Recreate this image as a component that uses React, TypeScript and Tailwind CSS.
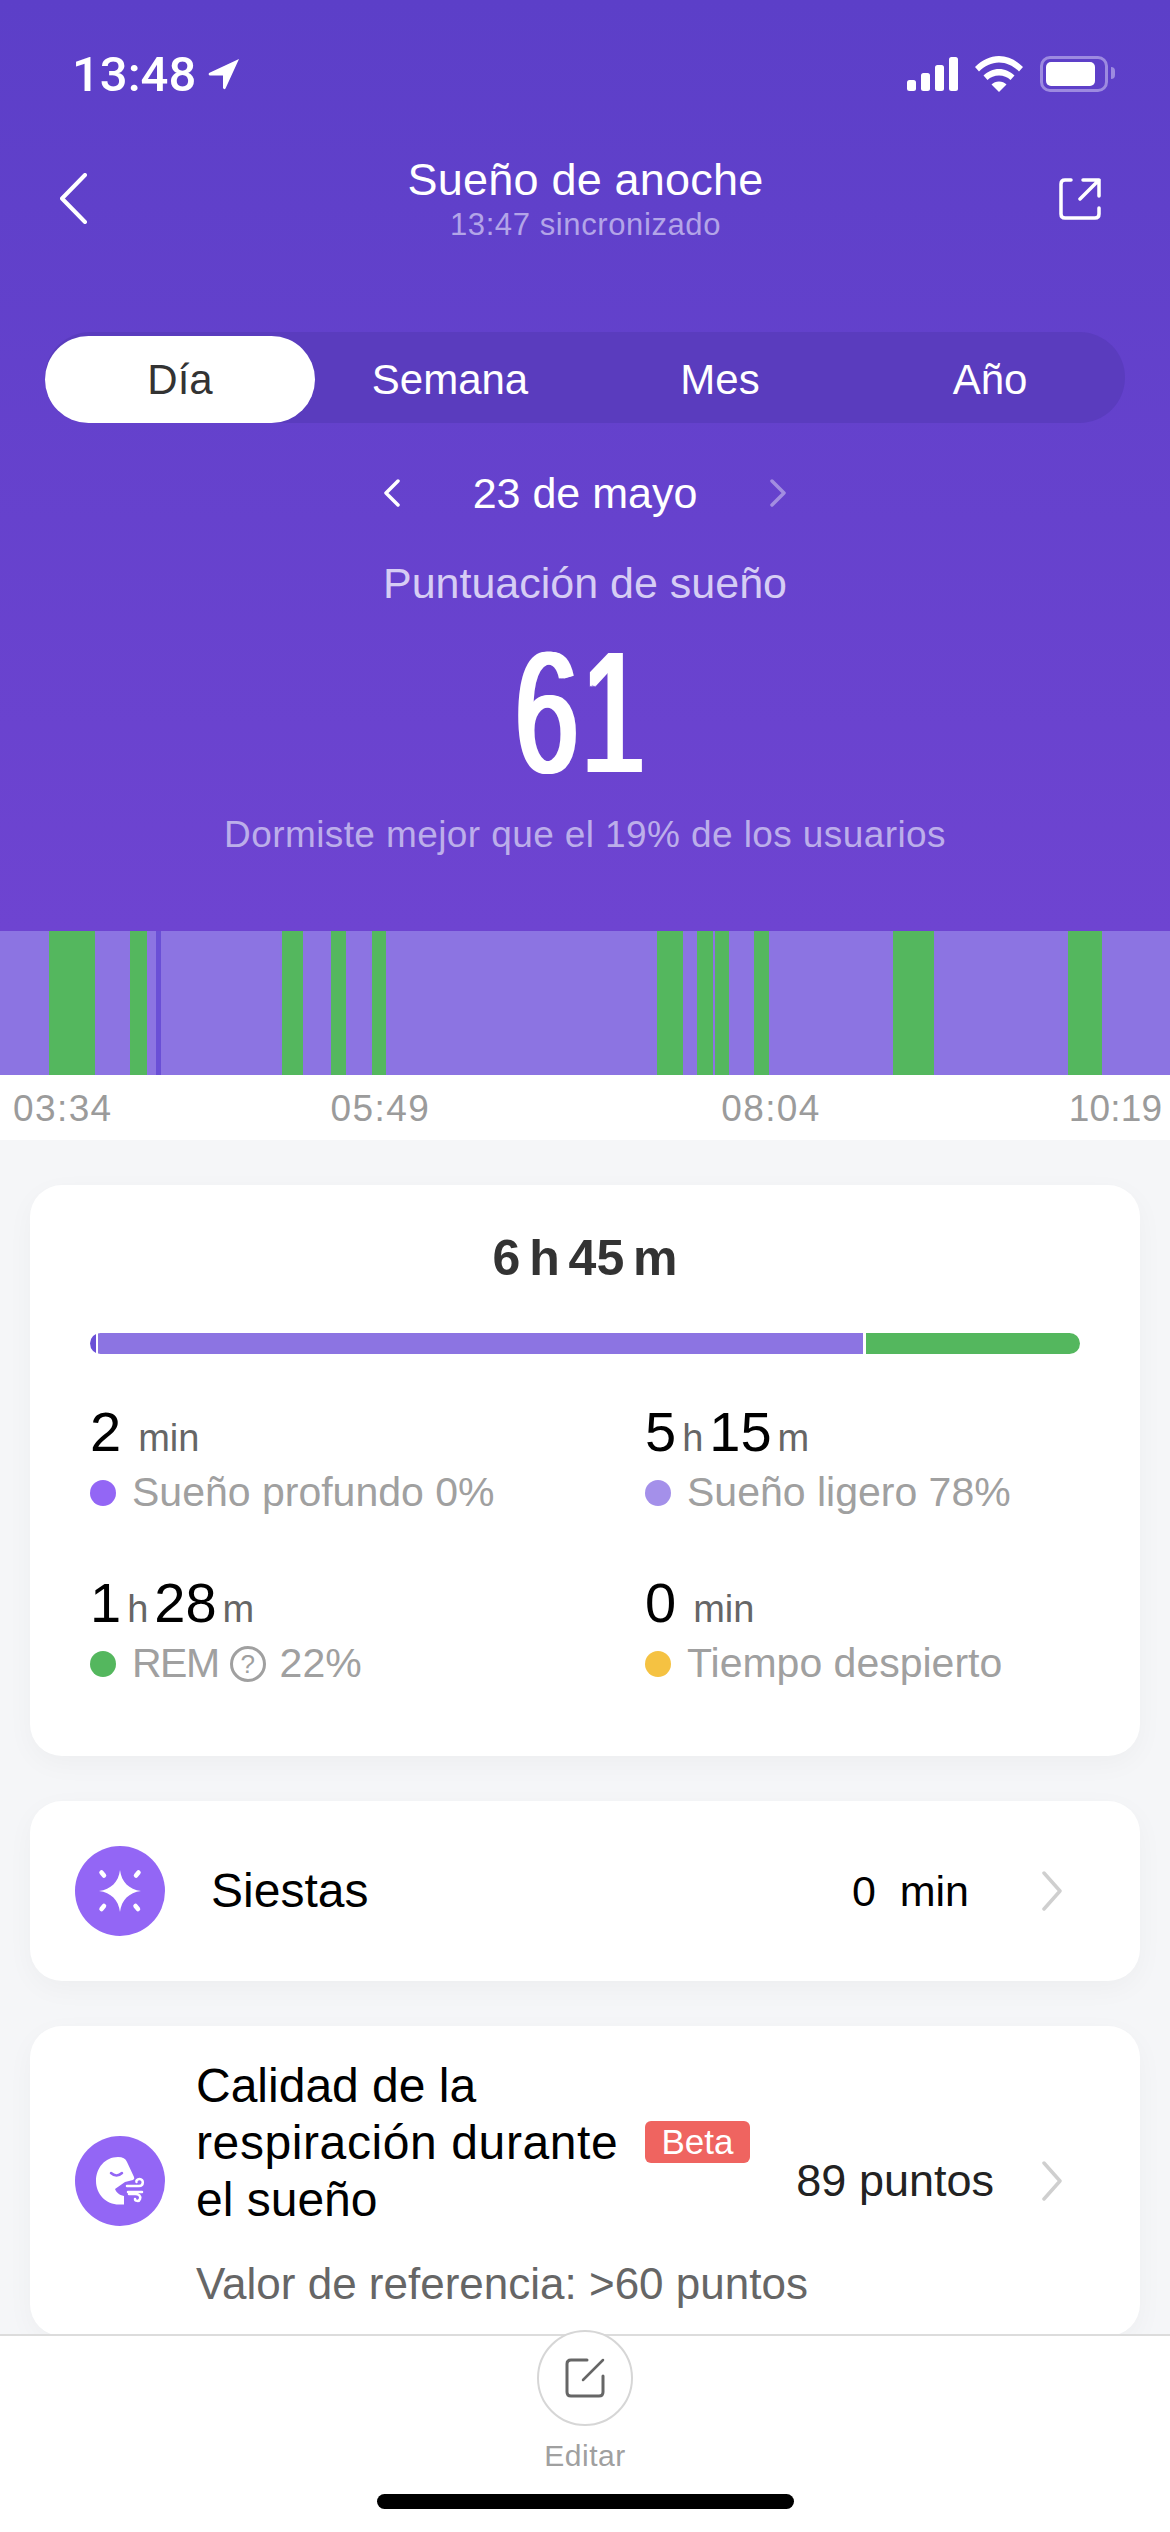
import React from 'react';

const font = { fontFamily: '"Liberation Sans", Arial, sans-serif' };

// Posiciones de las franjas REM en el gráfico (px)
const remBands = [
  [49, 46], [130, 17], [282, 21], [331, 15], [372, 14],
  [657, 26], [697, 16], [715, 14], [754, 15], [893, 41], [1068, 34],
];

const tabs = ['Día', 'Semana', 'Mes', 'Año'];

const Chevron = ({ className }: { className?: string }) => (
  <svg viewBox="0 0 22 40" className={className} fill="none" stroke="#cfcfcf" strokeWidth="3.5" strokeLinecap="round" strokeLinejoin="round">
    <path d="M3 2 L19 20 L3 38" />
  </svg>
);

const Stat = ({ parts, dot, label }: { parts: [string, string][]; dot: string; label: React.ReactNode }) => (
  <div>
    <div className="flex items-baseline h-[56px] leading-none">
      {parts.map(([value, unit]) => (
        <React.Fragment key={unit}>
          <span className="text-[56px] text-black">{value}</span>
          <span className={`text-[38px] text-[#666] ${unit === 'min' ? 'ml-[17px]' : 'mx-[6px]'}`}>{unit}</span>
        </React.Fragment>
      ))}
    </div>
    <div className="flex items-center mt-[10px] h-[46px]">
      <span className={`w-[26px] h-[26px] rounded-full ${dot}`} />
      <span className="ml-[16px] text-[41px] text-[#a0a0a0] flex items-center whitespace-nowrap">{label}</span>
    </div>
  </div>
);

export default function App() {
  return (
    <div className="w-[1170px] h-[2532px] flex flex-col overflow-hidden bg-[#f5f6f8]" style={font}>
      <div className="flex-1 min-h-0 overflow-hidden">
        {/* Cabecera morada */}
        <div className="h-[931px] bg-gradient-to-b from-[#5c3fc8] to-[#6e44d1] flex flex-col items-center text-white">
          {/* Barra de estado */}
          <div className="w-full h-[38px] mt-[55px] pl-[72px] pr-[62px] flex items-center justify-between">
            <div className="flex items-center">
              <span className="text-[49px] font-medium leading-none" style={{ fontFamily: 'Roboto, sans-serif' }}>13:48</span>
              <svg viewBox="0 0 32 32" className="w-[32px] h-[32px] ml-[12px]" fill="white">
                <path d="M31 1 L1 15 Q0 17 2 17.5 L15 17.5 L15 30 Q16 32 17.5 30.5 Z" />
              </svg>
            </div>
            <div className="flex items-center">
              <svg viewBox="0 0 51 34" className="w-[51px] h-[34px]" fill="white">
                <rect x="0" y="23" width="9" height="11" rx="2.5" />
                <rect x="14" y="16" width="9" height="18" rx="2.5" />
                <rect x="28" y="8" width="9" height="26" rx="2.5" />
                <rect x="42" y="0" width="9" height="34" rx="2.5" />
              </svg>
              <svg viewBox="0 0 48 36" className="w-[48px] h-[36px] ml-[17px]" fill="white">
                <path d="M24 0 C33 0 41 4 48 11 L44 15.5 C38.5 10 31.5 6.5 24 6.5 C16.5 6.5 9.5 10 4 15.5 L0 11 C7 4 15 0 24 0 Z" />
                <path d="M24 13 C30 13 35 15.5 39.5 19.5 L35.5 24 C32.5 21 28.5 19.5 24 19.5 C19.5 19.5 15.5 21 12.5 24 L8.5 19.5 C13 15.5 18 13 24 13 Z" />
                <path d="M24 25.5 C27 25.5 29.5 26.5 31.5 28.5 L24 36 L16.5 28.5 C18.5 26.5 21 25.5 24 25.5 Z" />
              </svg>
              <div className="relative w-[68px] h-[36px] ml-[17px] rounded-[10px] border-[3px] border-[#9d8ae0] p-[3px]">
                <div className="w-[49px] h-[24px] rounded-[5px] bg-white" />
                <div className="absolute left-[68px] top-[8px] w-[4px] h-[12px] rounded-r-full bg-[#9d8ae0]" />
              </div>
            </div>
          </div>

          {/* Título */}
          <div className="w-full h-[91px] mt-[60px] pl-[60px] pr-[69px] grid grid-cols-[1fr_auto_1fr] items-center">
            <svg viewBox="0 0 27 51" className="w-[27px] h-[51px]" fill="none" stroke="white" strokeWidth="4" strokeLinecap="round" strokeLinejoin="round">
              <path d="M25 2 L2 25.5 L25 49" />
            </svg>
            <div className="flex flex-col items-center -mt-[1px] translate-x-[5px]">
              <span className="text-[45px] leading-[54px] tracking-[0.2px]">Sueño de anoche</span>
              <span className="text-[31px] leading-[36px] tracking-[0.6px] text-[#b3a5e8]">13:47 sincronizado</span>
            </div>
            <svg viewBox="0 0 42 42" className="w-[42px] h-[42px] justify-self-end" fill="none" stroke="white" strokeWidth="3.5" strokeLinecap="round" strokeLinejoin="round">
              <path d="M12 2 H6 Q2 2 2 6 V36 Q2 40 6 40 H36 Q40 40 40 36 V30" />
              <path d="M21 21 L40 2 M24 2 H40 V18" />
            </svg>
          </div>

          {/* Selector de periodo */}
          <div className="w-[1080px] h-[91px] mt-[88px] rounded-full bg-[#5a3cbe] grid grid-cols-4">
            {tabs.map((tab, i) => (
              <div key={tab} className={`h-[87px] flex items-center justify-center text-[42px] ${i === 0 ? 'bg-white text-[#333] rounded-full mt-[4px]' : 'text-white mt-[4px]'}`}>
                {tab}
              </div>
            ))}
          </div>

          {/* Fecha */}
          <div className="h-[50px] mt-[45px] flex items-center">
            <svg viewBox="0 0 18 28" className="w-[18px] h-[28px]" fill="none" stroke="white" strokeWidth="3.5" strokeLinecap="round" strokeLinejoin="round">
              <path d="M15 2 L3 14 L15 26" />
            </svg>
            <span className="text-[43px] leading-none mx-[72px]">23 de mayo</span>
            <svg viewBox="0 0 18 28" className="w-[18px] h-[28px] opacity-40" fill="none" stroke="white" strokeWidth="3.5" strokeLinecap="round" strokeLinejoin="round">
              <path d="M3 2 L15 14 L3 26" />
            </svg>
          </div>

          <div className="h-[50px] mt-[40px] text-[43px] leading-[50px] text-[#d6cdf4]">Puntuación de sueño</div>
          {/* La sombra horizontal engrosa solo los trazos verticales, como la cifra condensada del original */}
          <div className="h-[130px] mt-[39px] mr-[6px] text-[172px] leading-[130px] tracking-[5px] scale-x-[0.66] [text-shadow:2px_0_white,-2px_0_white,4px_0_white,-4px_0_white]">61</div>
          <div className="h-[44px] mt-[36px] text-[37px] leading-[44px] tracking-[0.4px] text-[#bcaeea]">Dormiste mejor que el 19% de los usuarios</div>
        </div>

        {/* Gráfico de fases */}
        <svg viewBox="0 0 1170 144" className="block w-[1170px] h-[144px]">
          <rect width="1170" height="144" fill="#8c74e2" />
          {remBands.map(([x, w]) => (
            <rect key={x} x={x} width={w} height="144" fill="#54b75e" />
          ))}
          <rect x="156" width="5" height="144" fill="#6a4fd6" />
        </svg>
        <div className="h-[65px] bg-white pl-[13px] pt-[2px] flex items-center text-[37px] tracking-[1.4px] text-[#9b9b9b]">
          <span>03:34</span>
          <span className="ml-[218px]">05:49</span>
          <span className="ml-[291px]">08:04</span>
          <span className="ml-[248px] tracking-[0.2px]">10:19</span>
        </div>

        <div className="px-[30px] pt-[45px] flex flex-col gap-[45px]">
          {/* Resumen */}
          <div className="h-[571px] rounded-[32px] bg-white shadow-[0_8px_28px_rgba(0,0,0,0.035)] px-[60px] pt-[46px]">
            <div className="text-center text-[50px] leading-[54px] font-bold text-[#333] [word-spacing:-5px]">6 h 45 m</div>
            <div className="flex h-[21px] mt-[48px] rounded-full overflow-hidden gap-[2px]">
              <div className="w-[6px] bg-[#6a4fd6]" />
              <div className="w-[765px] bg-[#8c74e2]" />
              <div className="flex-1 ml-[1px] bg-[#54b75e]" />
            </div>
            <div className="grid grid-cols-[555px_1fr] gap-y-[59px] mt-[50px]">
              <Stat parts={[['2', 'min']]} dot="bg-[#9366f5]" label="Sueño profundo 0%" />
              <Stat parts={[['5', 'h'], ['15', 'm']]} dot="bg-[#a490ea]" label="Sueño ligero 78%" />
              <Stat
                parts={[['1', 'h'], ['28', 'm']]}
                dot="bg-[#54b75e]"
                label={
                  <>
                    <span className="tracking-[-1.5px]">REM</span>
                    <span className="w-[36px] h-[36px] ml-[11px] mr-[14px] rounded-full border-[3px] border-[#a0a0a0] flex items-center justify-center text-[26px] leading-none">?</span>
                    22%
                  </>
                }
              />
              <Stat parts={[['0', 'min']]} dot="bg-[#f5c242]" label="Tiempo despierto" />
            </div>
          </div>

          {/* Siestas */}
          <div className="h-[180px] rounded-[32px] bg-white shadow-[0_8px_28px_rgba(0,0,0,0.035)] pl-[45px] pr-[77px] flex items-center">
            <svg viewBox="0 0 90 90" className="w-[90px] h-[90px] shrink-0">
              <circle cx="45" cy="45" r="45" fill="#9366f5" />
              <path d="M45 24 C46.5 36 54 43.5 66 45 C54 46.5 46.5 54 45 66 C43.5 54 36 46.5 24 45 C36 43.5 43.5 36 45 24 Z" fill="white" />
              <path d="M26.5 26.5 L29 29.5 M63.5 26.5 L61 29.5 M26.5 63 L29 60 M63 63 L60.5 60" stroke="white" strokeWidth="4.5" strokeLinecap="round" />
            </svg>
            <span className="ml-[46px] text-[48px] text-black">Siestas</span>
            <span className="ml-auto text-[43px] text-black whitespace-pre">0  min</span>
            <Chevron className="w-[22px] h-[40px] ml-[72px] shrink-0" />
          </div>

          {/* Respiración */}
          <div className="h-[310px] rounded-[32px] bg-white shadow-[0_8px_28px_rgba(0,0,0,0.035)] pl-[45px] pr-[77px] flex items-center">
            <svg viewBox="0 0 90 90" className="w-[90px] h-[90px] shrink-0">
              <circle cx="45" cy="45" r="45" fill="#9366f5" />
              <path d="M43 21 C30 21 21 32 21 45 C21 58 31 68.5 44 68.5 L49 68.5 L49 60 C44 59 41 56 40 53 L50 46 L58 44 Q60 43 59 41 L52 26 Q50 21 43 21 Z" fill="white" />
              <path d="M36 37 Q41.5 42 47 37" fill="none" stroke="#9366f5" strokeWidth="2.5" strokeLinecap="round" />
              <path d="M52 50 H64 C69 50 69 43 64.5 43 C62 43 61 45 61.5 46 M53 56 H67 M54 58 H60 C64 58 66 60 65 63 C64 66 60 65 60 63" fill="none" stroke="white" strokeWidth="2.5" strokeLinecap="round" />
            </svg>
            <div className="ml-[31px] w-[554px] shrink-0 pt-[3px]">
              <div className="flex items-center">
                <div className="w-[449px] text-[48px] leading-[57px] text-black whitespace-nowrap">
                  <div>Calidad de la</div>
                  <div className="tracking-[0.6px]">respiración durante</div>
                  <div>el sueño</div>
                </div>
                <span className="w-[105px] h-[42px] rounded-[6px] bg-[#ef6460] text-white text-[35px] flex items-center justify-center">Beta</span>
              </div>
              <div className="mt-[31px] text-[44px] leading-[50px] text-[#666] whitespace-nowrap">Valor de referencia: &gt;60 puntos</div>
            </div>
            <span className="ml-auto text-[45px] text-[#222] whitespace-nowrap">89 puntos</span>
            <Chevron className="w-[22px] h-[40px] ml-[47px] shrink-0" />
          </div>
        </div>
      </div>

      {/* Barra inferior */}
      <div className="relative h-[198px] shrink-0 bg-white border-t-2 border-[#dcdcdc] flex flex-col items-center">
        <div className="w-[96px] h-[96px] -mt-[6px] rounded-full bg-white border-2 border-[#d6d6d6] flex items-center justify-center">
          <svg viewBox="0 0 42 42" className="w-[42px] h-[42px]" fill="none" stroke="#666" strokeLinecap="round" strokeLinejoin="round">
            <path d="M23 3 H7 Q3 3 3 7 V35 Q3 39 7 39 H35 Q39 39 39 35 V19" strokeWidth="3" />
            <path d="M19 23 L39 3" strokeWidth="2.5" />
          </svg>
        </div>
        <span className="mt-[12px] text-[30px] leading-[36px] tracking-[0.5px] text-[#a0a0a0]">Editar</span>
        <div className="mt-[20px] w-[417px] h-[15px] rounded-full bg-black" />
      </div>
    </div>
  );
}
